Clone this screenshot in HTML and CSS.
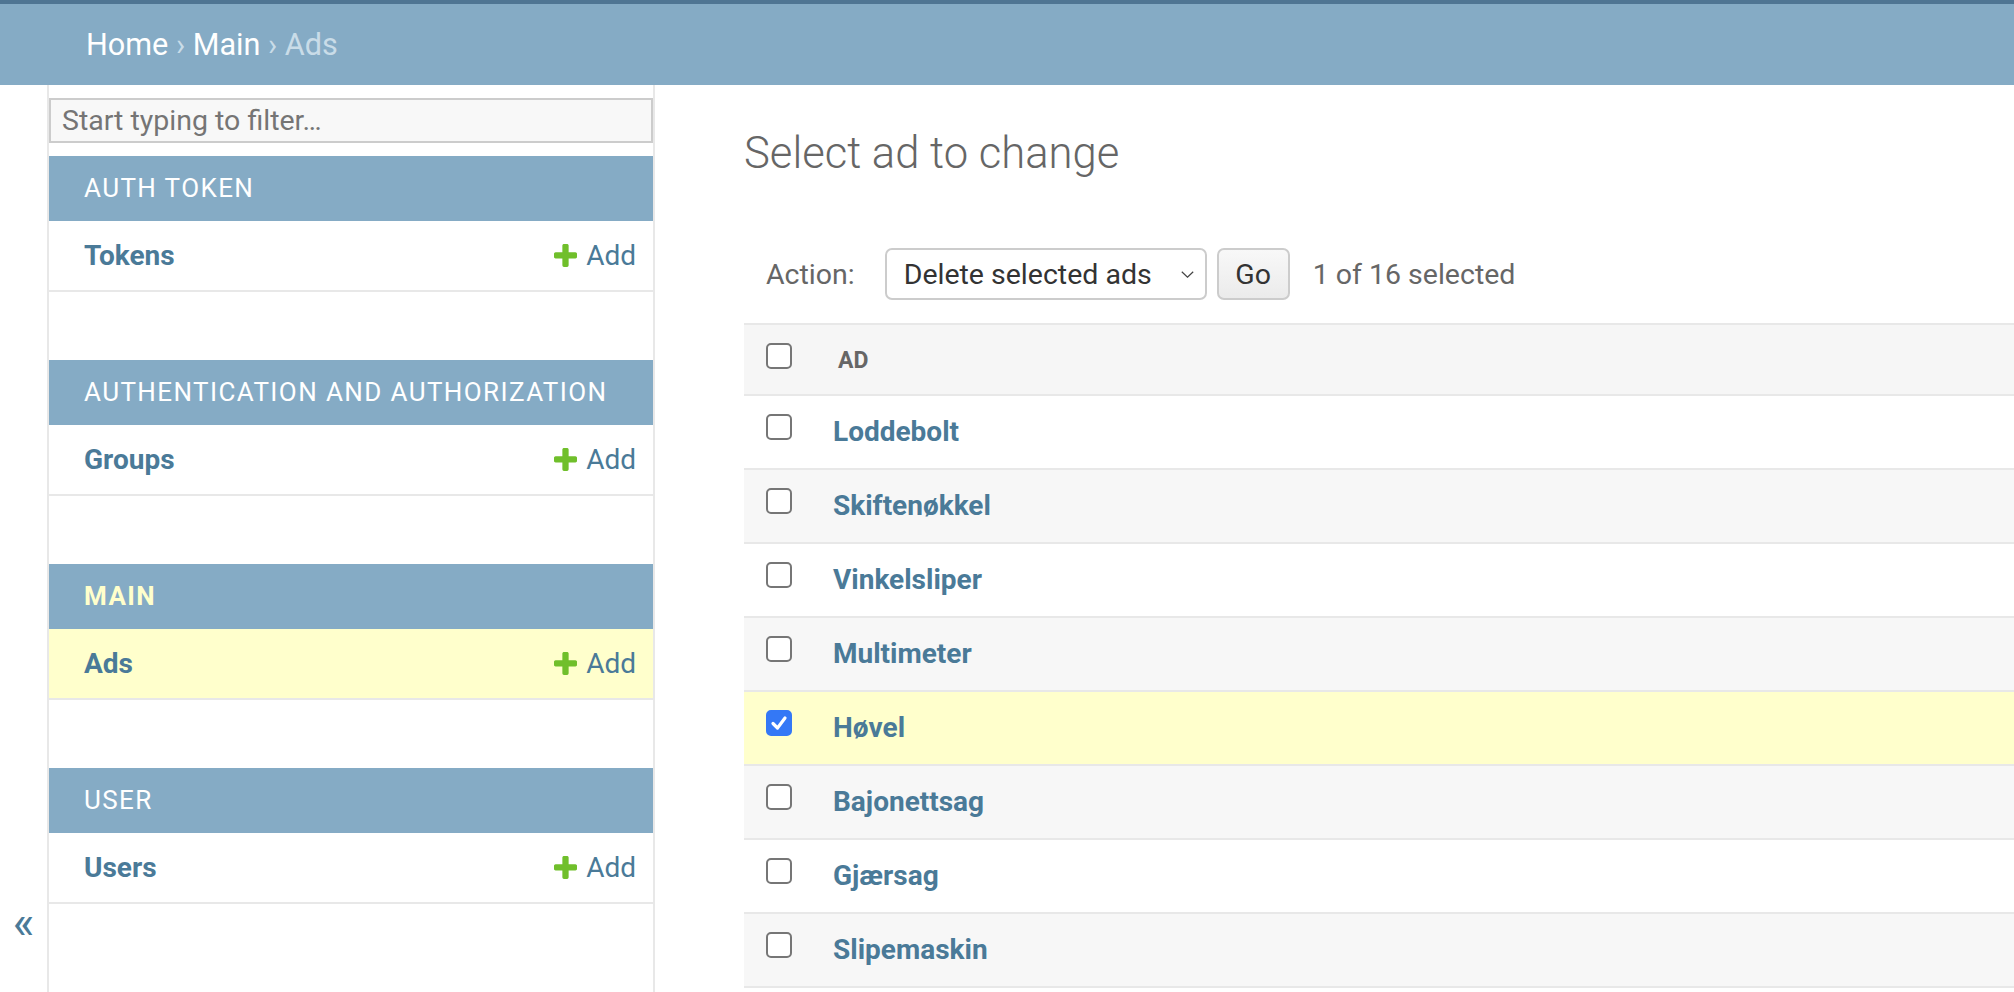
FILE: index.html
```html
<!DOCTYPE html>
<html lang="en">
<head>
<meta charset="utf-8">
<title>Select ad to change</title>
<link rel="stylesheet" href="styles.css">
</head>
<body>
<div class="topbar"></div>
<nav class="breadcrumbs"><span><a href="#">Home</a> › <a href="#">Main</a> › Ads</span></nav>
<div class="main">
  <div class="toggle"><span>«</span></div>
  <aside class="sidebar">
    <input class="filter" type="search" placeholder="Start typing to filter…">
    <div class="module">
      <div class="caption">Auth Token</div>
      <div class="row"><a class="model" href="#">Tokens</a><a class="add" href="#"><svg class="plus" viewBox="192 192 1408 1408" width="23" height="23"><path fill="#70bf2b" d="M1600 796v192q0 40-28 68t-68 28h-416v416q0 40-28 68t-68 28h-192q-40 0-68-28t-28-68v-416h-416q-40 0-68-28t-28-68v-192q0-40 28-68t68-28h416v-416q0-40 28-68t68-28h192q40 0 68 28t28 68v416h416q40 0 68 28t28 68z"/></svg>Add</a></div>
    </div>
    <div class="module">
      <div class="caption">Authentication and Authorization</div>
      <div class="row"><a class="model" href="#">Groups</a><a class="add" href="#"><svg class="plus" viewBox="192 192 1408 1408" width="23" height="23"><path fill="#70bf2b" d="M1600 796v192q0 40-28 68t-68 28h-416v416q0 40-28 68t-68 28h-192q-40 0-68-28t-28-68v-416h-416q-40 0-68-28t-28-68v-192q0-40 28-68t68-28h416v-416q0-40 28-68t68-28h192q40 0 68 28t28 68v416h416q40 0 68 28t28 68z"/></svg>Add</a></div>
    </div>
    <div class="module current">
      <div class="caption">Main</div>
      <div class="row selected"><a class="model" href="#">Ads</a><a class="add" href="#"><svg class="plus" viewBox="192 192 1408 1408" width="23" height="23"><path fill="#70bf2b" d="M1600 796v192q0 40-28 68t-68 28h-416v416q0 40-28 68t-68 28h-192q-40 0-68-28t-28-68v-416h-416q-40 0-68-28t-28-68v-192q0-40 28-68t68-28h416v-416q0-40 28-68t68-28h192q40 0 68 28t28 68v416h416q40 0 68 28t28 68z"/></svg>Add</a></div>
    </div>
    <div class="module">
      <div class="caption">User</div>
      <div class="row"><a class="model" href="#">Users</a><a class="add" href="#"><svg class="plus" viewBox="192 192 1408 1408" width="23" height="23"><path fill="#70bf2b" d="M1600 796v192q0 40-28 68t-68 28h-416v416q0 40-28 68t-68 28h-192q-40 0-68-28t-28-68v-416h-416q-40 0-68-28t-28-68v-192q0-40 28-68t68-28h416v-416q0-40 28-68t68-28h192q40 0 68 28t28 68v416h416q40 0 68 28t28 68z"/></svg>Add</a></div>
    </div>
  </aside>
  <main class="content">
    <h1>Select ad to change</h1>
    <div class="actions">
      <span class="label">Action:</span>
      <div class="select"><span>Delete selected ads</span><svg width="13" height="7" viewBox="0 0 13 7"><polyline points="0.8,0.8 6.5,6.2 12.2,0.8" fill="none" stroke="#444" stroke-width="1.2"/></svg></div>
      <div class="go">Go</div>
      <span class="count">1 of 16 selected</span>
    </div>
    <div class="list">
      <div class="lrow head"><span class="cb"></span><span class="colname">AD</span></div>
      <div class="lrow"><span class="cb"></span><a class="item" href="#">Loddebolt</a></div>
      <div class="lrow alt"><span class="cb"></span><a class="item" href="#">Skiftenøkkel</a></div>
      <div class="lrow"><span class="cb"></span><a class="item" href="#">Vinkelsliper</a></div>
      <div class="lrow alt"><span class="cb"></span><a class="item" href="#">Multimeter</a></div>
      <div class="lrow selected"><span class="cb checked"><svg width="22" height="22" viewBox="0 0 22 22"><polyline points="5,11.5 9.5,16 17,6" fill="none" stroke="#fff" stroke-width="3.2" stroke-linecap="round" stroke-linejoin="round"/></svg></span><a class="item" href="#">Høvel</a></div>
      <div class="lrow alt"><span class="cb"></span><a class="item" href="#">Bajonettsag</a></div>
      <div class="lrow"><span class="cb"></span><a class="item" href="#">Gjærsag</a></div>
      <div class="lrow alt"><span class="cb"></span><a class="item" href="#">Slipemaskin</a></div>
    </div>
  </main>
</div>
</body>
</html>
```

FILE: styles.css
```css
html, body {
  margin: 0;
  height: 100%;
  overflow: hidden;
}
body {
  font-family: Roboto, "Liberation Sans", sans-serif;
  color: #333;
  background: #fff;
}
a {
  text-decoration: none;
}

.topbar {
  height: 4px;
  background: #4f7593;
}

.breadcrumbs {
  height: 81px;
  line-height: 81px;
  background: #85abc5;
  padding-left: 86px;
  font-size: 30.6px;
  color: #c9dce8;
}
.breadcrumbs a {
  color: #fff;
}

.main {
  display: flex;
  min-height: calc(100vh - 85px);
}

.toggle {
  width: 47px;
  flex: none;
  padding-top: 814px;
  text-align: center;
  font-size: 46px;
  line-height: 46px;
  color: #4a7a98;
}

.sidebar {
  width: 604px;
  flex: none;
  border-left: 2px solid #e8e8e8;
  border-right: 2px solid #e8e8e8;
}

.filter {
  display: block;
  box-sizing: border-box;
  width: 100%;
  height: 45px;
  margin: 13px 0;
  padding: 0 11px;
  border: 2px solid #ccc;
  border-radius: 0;
  background: #f8f8f8;
  font-family: Roboto, "Liberation Sans", sans-serif;
  font-size: 28.5px;
  color: #333;
  outline: none;
}
.filter::placeholder {
  color: #757575;
}

.module {
  margin-bottom: 68px;
}
.caption {
  height: 65px;
  line-height: 65px;
  background: #85abc5;
  color: #fff;
  font-size: 26px;
  letter-spacing: 1.4px;
  text-transform: uppercase;
  padding-left: 35px;
}
.module.current .caption {
  color: #ffffcc;
  font-weight: 700;
}
.row {
  height: 69px;
  border-bottom: 2px solid #e8e8e8;
  display: flex;
  align-items: center;
  justify-content: space-between;
  padding: 0 17px 0 35px;
}
.row.selected {
  background: #ffffcc;
}
.model {
  font-weight: 700;
  font-size: 28px;
  color: #4a7a98;
}
.add {
  display: flex;
  align-items: center;
  gap: 9px;
  font-size: 28px;
  color: #4a7a98;
}
.plus {
  display: block;
}

.content {
  flex: 1;
  min-width: 0;
  padding: 43px 0 0 89px;
}
h1 {
  margin: 0;
  font-size: 43.6px;
  line-height: 52px;
  font-weight: 300;
  color: #666;
}

.actions {
  display: flex;
  align-items: center;
  height: 52px;
  margin: 68px 0 23px;
  padding-left: 22px;
  font-size: 28.5px;
  color: #666;
}
.select {
  margin-left: 30px;
  box-sizing: border-box;
  width: 322px;
  height: 52px;
  border: 2px solid #ccc;
  border-radius: 7px;
  display: flex;
  align-items: center;
  justify-content: space-between;
  padding: 0 11px 0 17px;
  color: #333;
  background: #fff;
}
.select svg {
  display: block;
}
.go {
  margin-left: 10px;
  box-sizing: border-box;
  width: 73px;
  height: 52px;
  border: 2px solid #ccc;
  border-radius: 7px;
  background: linear-gradient(#f8f8f8, #ebebeb);
  color: #333;
  display: flex;
  align-items: center;
  justify-content: center;
}
.count {
  margin-left: 23px;
}

.list {
  width: 100%;
}
.lrow {
  box-sizing: border-box;
  height: 74px;
  display: flex;
  align-items: center;
  padding: 0 0 6px 22px;
  border-bottom: 2px solid #e8e8e8;
  background: #fff;
}
.lrow.alt {
  background: #f7f7f7;
}
.lrow.selected {
  background: #ffffcc;
}
.lrow.head {
  height: 73px;
  border-top: 2px solid #e8e8e8;
  background: #f6f6f6;
  padding-bottom: 4px;
}
.cb {
  box-sizing: border-box;
  width: 26px;
  height: 26px;
  flex: none;
  border: 2px solid #767676;
  border-radius: 5px;
  background: #fff;
  margin-bottom: 4px;
  display: flex;
  align-items: center;
  justify-content: center;
}
.cb.checked {
  background: #3478f6;
  border-color: #3478f6;
}
.cb svg {
  display: block;
}
.colname {
  margin-left: 46px;
  margin-top: 6px;
  font-size: 23px;
  font-weight: 700;
  color: #666;
}
.item {
  margin-left: 41px;
  margin-top: 5px;
  font-size: 28px;
  font-weight: 700;
  color: #4a7a98;
}
```
